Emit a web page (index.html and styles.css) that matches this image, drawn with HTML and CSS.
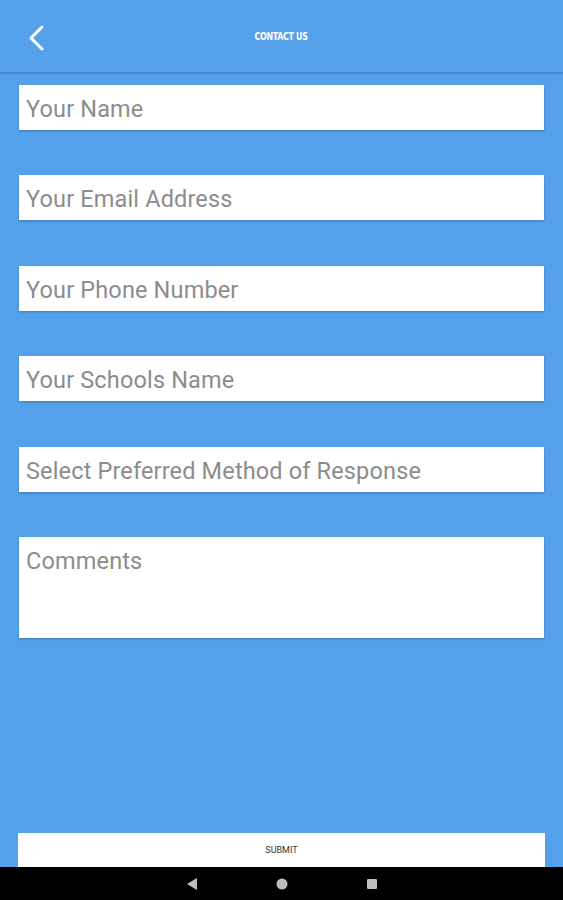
FILE: index.html
```html
<!DOCTYPE html>
<html>

<head>
    <title>Contact Us</title>
    <link rel="stylesheet" href="styles.css">
</head>

<body>
    <div class="screen">
        <div class="topbar">
            <a class="back" href="#">
                <svg width="24" height="30" viewBox="0 0 24 30">
                    <polyline points="16,4 5,15 16,26" fill="none" stroke="#fff" stroke-width="3" stroke-linecap="round" stroke-linejoin="round" />
                </svg>
            </a>
            <div class="title">CONTACT US</div>
        </div>

        <form class="contact-form" action="/contact" method="post">
            <input class="field" type="text" name="name" placeholder="Your Name">
            <input class="field" type="email" name="email" placeholder="Your Email Address">
            <input class="field" type="tel" name="phone" placeholder="Your Phone Number">
            <input class="field" type="text" name="school" placeholder="Your Schools Name">
            <div class="field select-field">Select Preferred Method of Response</div>
            <textarea class="field comments" name="comments" placeholder="Comments"></textarea>

            <div class="spacer"></div>

            <button class="submit-btn" type="submit">SUBMIT</button>
        </form>

        <div class="navbar">
            <svg width="14" height="14" viewBox="0 0 14 14">
                <polygon points="12,1 12,13 2,7" fill="#bdbdbd" />
            </svg>
            <svg width="14" height="14" viewBox="0 0 14 14">
                <circle cx="7" cy="7" r="5.5" fill="#bdbdbd" />
            </svg>
            <svg width="14" height="14" viewBox="0 0 14 14">
                <rect x="2" y="2" width="10" height="10" rx="1" fill="#bdbdbd" />
            </svg>
        </div>
    </div>
</body>

</html>
```

FILE: styles.css
```css
html,
body {
    margin: 0;
    padding: 0;
}

body {
    font-family: Roboto, "Liberation Sans", sans-serif;
    background-color: rgb(85, 160, 235);
}

.screen {
    display: flex;
    flex-direction: column;
    height: 900px;
    overflow: hidden;
}

.topbar {
    position: relative;
    height: 72px;
    display: flex;
    align-items: center;
    justify-content: center;
    border-bottom: 1px solid rgb(64, 131, 200);
    box-shadow: 0 1px 1px rgba(0, 0, 0, 0.12);
}

.back {
    position: absolute;
    left: 26px;
    top: 23px;
    display: block;
    height: 30px;
}

.title {
    color: #fff;
    font-family: "DejaVu Sans Condensed", "DejaVu Sans", sans-serif;
    font-weight: bold;
    font-size: 11px;
    letter-spacing: -0.4px;
    transform: scaleX(0.8);
    margin-top: 1px;
}

.contact-form {
    flex: 1;
    display: flex;
    flex-direction: column;
    padding: 12px 19px 0 19px;
}

.field {
    display: block;
    box-sizing: border-box;
    width: 100%;
    height: 45px;
    margin: 0 0 45.4px 0;
    padding: 3px 7px 0 7px;
    border: none;
    border-radius: 0;
    background: #fff;
    font-family: Roboto, "Liberation Sans", sans-serif;
    font-size: 23.5px;
    letter-spacing: 0.15px;
    color: #333;
    box-shadow: 0 1px 2px rgba(0, 0, 0, 0.25);
    outline: none;
}

.field::placeholder {
    color: #8c8c8c;
}

.select-field {
    display: flex;
    align-items: center;
    color: #8c8c8c;
}

.comments {
    height: 101px;
    padding-top: 10px;
    resize: none;
    margin-bottom: 0;
}

.spacer {
    flex: 1;
}

.submit-btn {
    display: block;
    width: calc(100% + 2px);
    margin-left: -1px;
    height: 34px;
    padding: 0;
    border: none;
    background: #fff;
    color: #333;
    font-family: Roboto, "Liberation Sans", sans-serif;
    font-size: 9px;
    cursor: pointer;
}

.navbar {
    height: 33px;
    background: #000;
    display: flex;
    align-items: center;
    justify-content: center;
    gap: 76px;
}
```
